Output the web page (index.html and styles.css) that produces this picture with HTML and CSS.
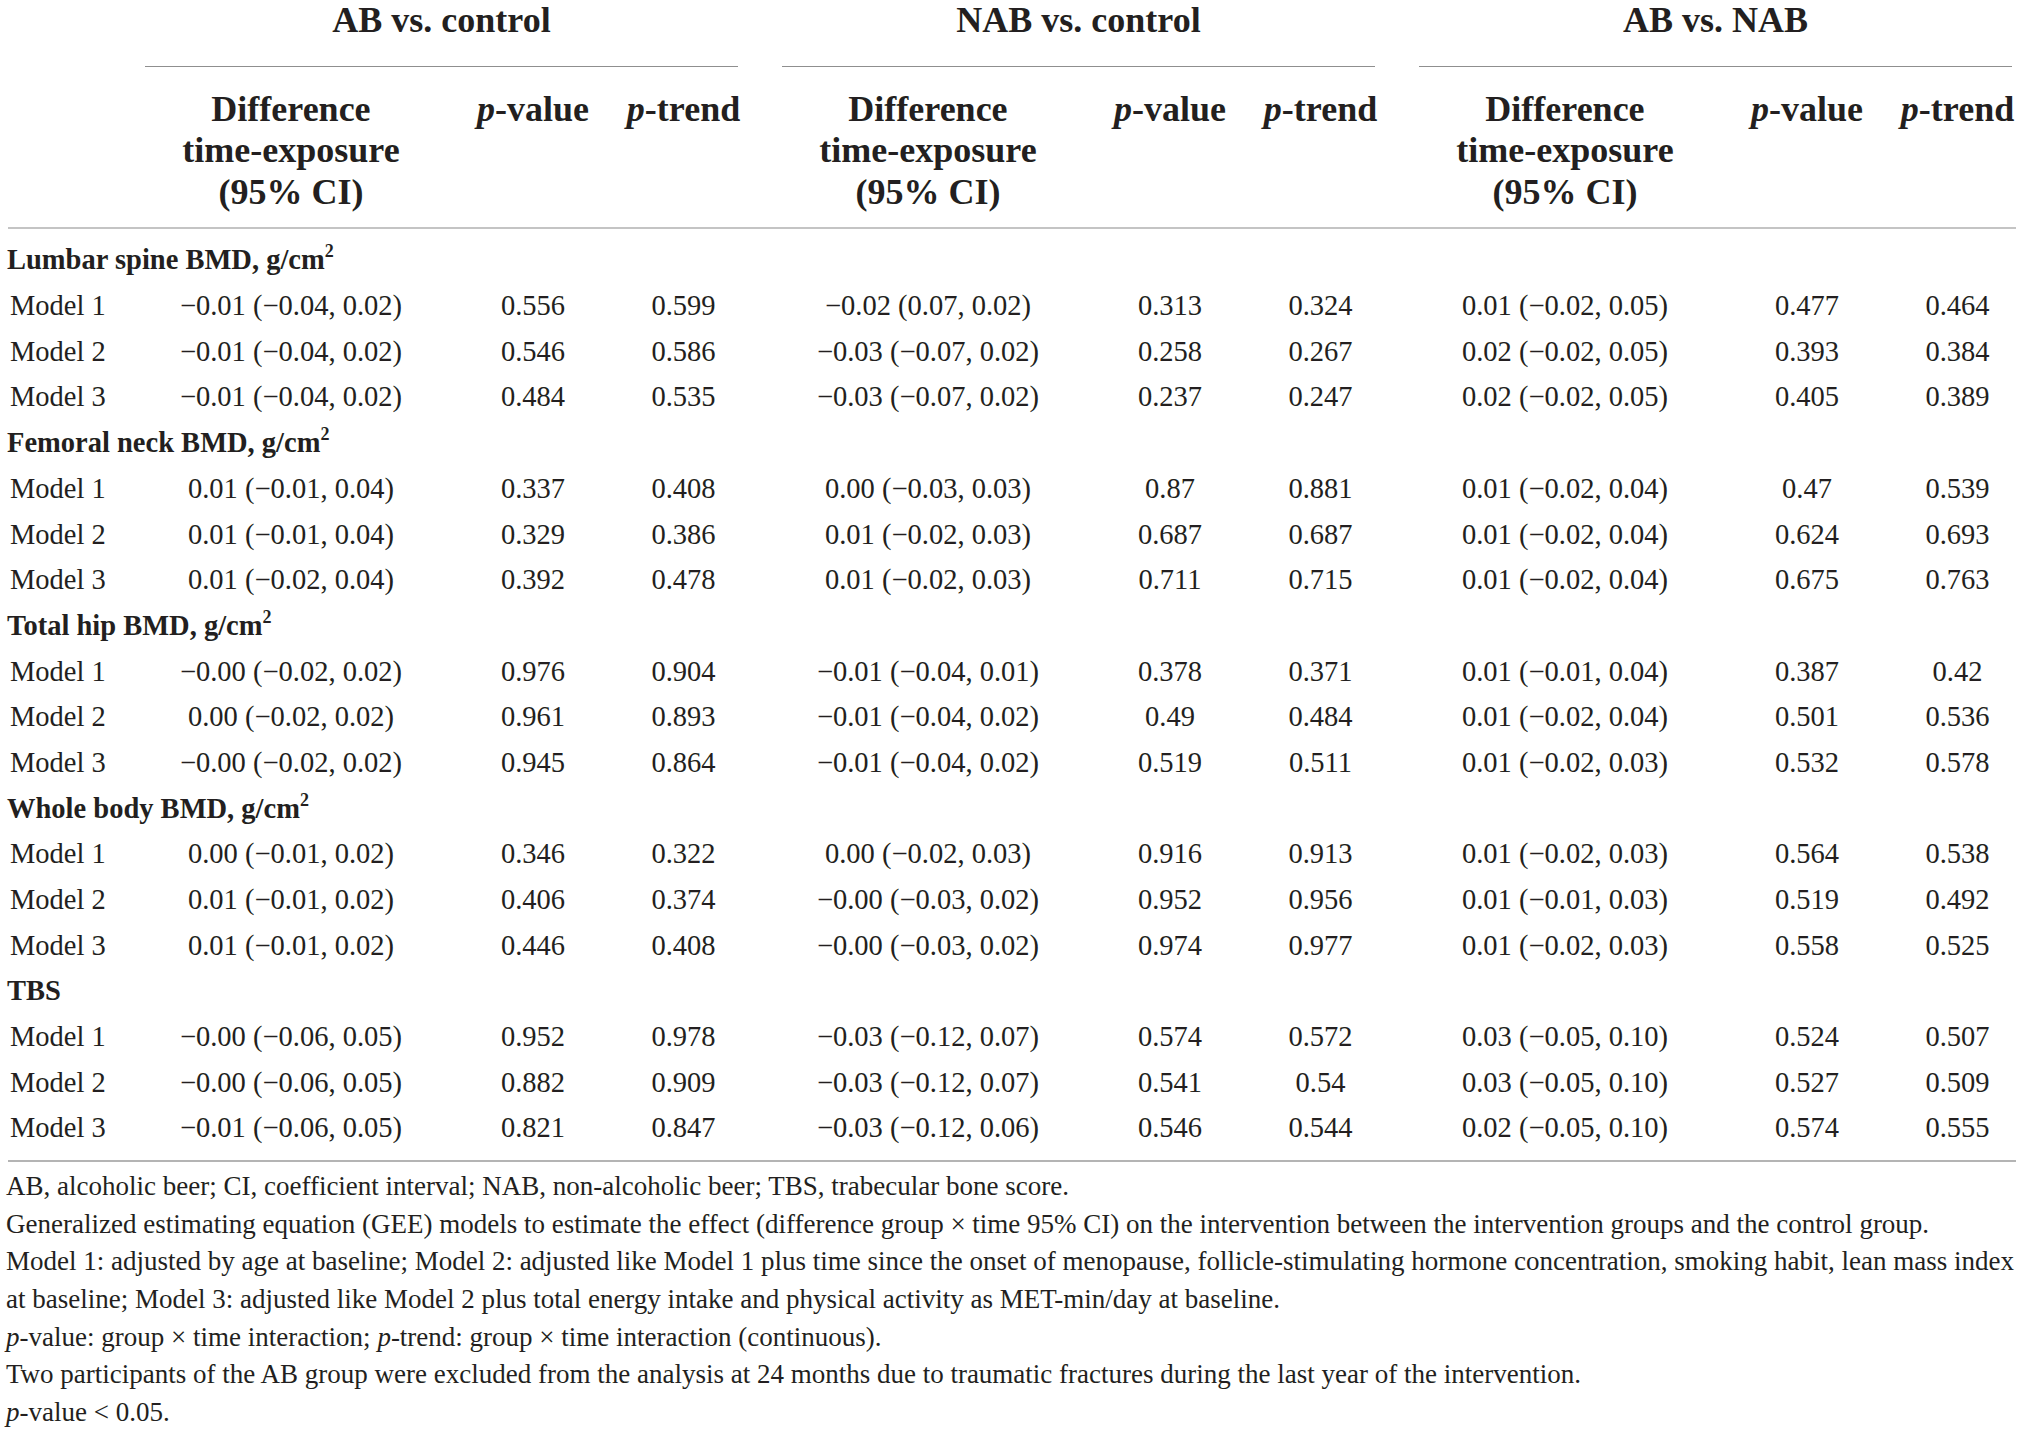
FILE: index.html
```html
<!DOCTYPE html>
<html lang="en">
<head>
<meta charset="utf-8">
<title>Table</title>
<link rel="stylesheet" href="styles.css">
</head>
<body>
<div class="table">
  <div class="row groups">
    <div></div>
    <div class="group-head"><span>AB vs. control</span></div>
    <div class="group-head"><span>NAB vs. control</span></div>
    <div class="group-head"><span>AB vs. NAB</span></div>
  </div>
  <div class="row colheads">
    <div></div>
    <div class="grp"><div class="c">Difference<br>time-exposure<br>(95% CI)</div><div class="c"><span><i>p</i>-value</span></div><div class="c"><span><i>p</i>-trend</span></div></div>
    <div class="grp"><div class="c">Difference<br>time-exposure<br>(95% CI)</div><div class="c"><span><i>p</i>-value</span></div><div class="c"><span><i>p</i>-trend</span></div></div>
    <div class="grp"><div class="c">Difference<br>time-exposure<br>(95% CI)</div><div class="c"><span><i>p</i>-value</span></div><div class="c"><span><i>p</i>-trend</span></div></div>
  </div>
  <div class="body">
    <div class="section">Lumbar spine BMD, g/cm<sup>2</sup></div>
    <div class="row data"><div class="lab">Model 1</div>
      <div class="grp"><div class="c">−0.01 (−0.04, 0.02)</div><div class="c">0.556</div><div class="c">0.599</div></div>
      <div class="grp"><div class="c">−0.02 (0.07, 0.02)</div><div class="c">0.313</div><div class="c">0.324</div></div>
      <div class="grp"><div class="c">0.01 (−0.02, 0.05)</div><div class="c">0.477</div><div class="c">0.464</div></div>
    </div>
    <div class="row data"><div class="lab">Model 2</div>
      <div class="grp"><div class="c">−0.01 (−0.04, 0.02)</div><div class="c">0.546</div><div class="c">0.586</div></div>
      <div class="grp"><div class="c">−0.03 (−0.07, 0.02)</div><div class="c">0.258</div><div class="c">0.267</div></div>
      <div class="grp"><div class="c">0.02 (−0.02, 0.05)</div><div class="c">0.393</div><div class="c">0.384</div></div>
    </div>
    <div class="row data"><div class="lab">Model 3</div>
      <div class="grp"><div class="c">−0.01 (−0.04, 0.02)</div><div class="c">0.484</div><div class="c">0.535</div></div>
      <div class="grp"><div class="c">−0.03 (−0.07, 0.02)</div><div class="c">0.237</div><div class="c">0.247</div></div>
      <div class="grp"><div class="c">0.02 (−0.02, 0.05)</div><div class="c">0.405</div><div class="c">0.389</div></div>
    </div>

    <div class="section">Femoral neck BMD, g/cm<sup>2</sup></div>
    <div class="row data"><div class="lab">Model 1</div>
      <div class="grp"><div class="c">0.01 (−0.01, 0.04)</div><div class="c">0.337</div><div class="c">0.408</div></div>
      <div class="grp"><div class="c">0.00 (−0.03, 0.03)</div><div class="c">0.87</div><div class="c">0.881</div></div>
      <div class="grp"><div class="c">0.01 (−0.02, 0.04)</div><div class="c">0.47</div><div class="c">0.539</div></div>
    </div>
    <div class="row data"><div class="lab">Model 2</div>
      <div class="grp"><div class="c">0.01 (−0.01, 0.04)</div><div class="c">0.329</div><div class="c">0.386</div></div>
      <div class="grp"><div class="c">0.01 (−0.02, 0.03)</div><div class="c">0.687</div><div class="c">0.687</div></div>
      <div class="grp"><div class="c">0.01 (−0.02, 0.04)</div><div class="c">0.624</div><div class="c">0.693</div></div>
    </div>
    <div class="row data"><div class="lab">Model 3</div>
      <div class="grp"><div class="c">0.01 (−0.02, 0.04)</div><div class="c">0.392</div><div class="c">0.478</div></div>
      <div class="grp"><div class="c">0.01 (−0.02, 0.03)</div><div class="c">0.711</div><div class="c">0.715</div></div>
      <div class="grp"><div class="c">0.01 (−0.02, 0.04)</div><div class="c">0.675</div><div class="c">0.763</div></div>
    </div>

    <div class="section">Total hip BMD, g/cm<sup>2</sup></div>
    <div class="row data"><div class="lab">Model 1</div>
      <div class="grp"><div class="c">−0.00 (−0.02, 0.02)</div><div class="c">0.976</div><div class="c">0.904</div></div>
      <div class="grp"><div class="c">−0.01 (−0.04, 0.01)</div><div class="c">0.378</div><div class="c">0.371</div></div>
      <div class="grp"><div class="c">0.01 (−0.01, 0.04)</div><div class="c">0.387</div><div class="c">0.42</div></div>
    </div>
    <div class="row data"><div class="lab">Model 2</div>
      <div class="grp"><div class="c">0.00 (−0.02, 0.02)</div><div class="c">0.961</div><div class="c">0.893</div></div>
      <div class="grp"><div class="c">−0.01 (−0.04, 0.02)</div><div class="c">0.49</div><div class="c">0.484</div></div>
      <div class="grp"><div class="c">0.01 (−0.02, 0.04)</div><div class="c">0.501</div><div class="c">0.536</div></div>
    </div>
    <div class="row data"><div class="lab">Model 3</div>
      <div class="grp"><div class="c">−0.00 (−0.02, 0.02)</div><div class="c">0.945</div><div class="c">0.864</div></div>
      <div class="grp"><div class="c">−0.01 (−0.04, 0.02)</div><div class="c">0.519</div><div class="c">0.511</div></div>
      <div class="grp"><div class="c">0.01 (−0.02, 0.03)</div><div class="c">0.532</div><div class="c">0.578</div></div>
    </div>

    <div class="section">Whole body BMD, g/cm<sup>2</sup></div>
    <div class="row data"><div class="lab">Model 1</div>
      <div class="grp"><div class="c">0.00 (−0.01, 0.02)</div><div class="c">0.346</div><div class="c">0.322</div></div>
      <div class="grp"><div class="c">0.00 (−0.02, 0.03)</div><div class="c">0.916</div><div class="c">0.913</div></div>
      <div class="grp"><div class="c">0.01 (−0.02, 0.03)</div><div class="c">0.564</div><div class="c">0.538</div></div>
    </div>
    <div class="row data"><div class="lab">Model 2</div>
      <div class="grp"><div class="c">0.01 (−0.01, 0.02)</div><div class="c">0.406</div><div class="c">0.374</div></div>
      <div class="grp"><div class="c">−0.00 (−0.03, 0.02)</div><div class="c">0.952</div><div class="c">0.956</div></div>
      <div class="grp"><div class="c">0.01 (−0.01, 0.03)</div><div class="c">0.519</div><div class="c">0.492</div></div>
    </div>
    <div class="row data"><div class="lab">Model 3</div>
      <div class="grp"><div class="c">0.01 (−0.01, 0.02)</div><div class="c">0.446</div><div class="c">0.408</div></div>
      <div class="grp"><div class="c">−0.00 (−0.03, 0.02)</div><div class="c">0.974</div><div class="c">0.977</div></div>
      <div class="grp"><div class="c">0.01 (−0.02, 0.03)</div><div class="c">0.558</div><div class="c">0.525</div></div>
    </div>

    <div class="section">TBS</div>
    <div class="row data"><div class="lab">Model 1</div>
      <div class="grp"><div class="c">−0.00 (−0.06, 0.05)</div><div class="c">0.952</div><div class="c">0.978</div></div>
      <div class="grp"><div class="c">−0.03 (−0.12, 0.07)</div><div class="c">0.574</div><div class="c">0.572</div></div>
      <div class="grp"><div class="c">0.03 (−0.05, 0.10)</div><div class="c">0.524</div><div class="c">0.507</div></div>
    </div>
    <div class="row data"><div class="lab">Model 2</div>
      <div class="grp"><div class="c">−0.00 (−0.06, 0.05)</div><div class="c">0.882</div><div class="c">0.909</div></div>
      <div class="grp"><div class="c">−0.03 (−0.12, 0.07)</div><div class="c">0.541</div><div class="c">0.54</div></div>
      <div class="grp"><div class="c">0.03 (−0.05, 0.10)</div><div class="c">0.527</div><div class="c">0.509</div></div>
    </div>
    <div class="row data"><div class="lab">Model 3</div>
      <div class="grp"><div class="c">−0.01 (−0.06, 0.05)</div><div class="c">0.821</div><div class="c">0.847</div></div>
      <div class="grp"><div class="c">−0.03 (−0.12, 0.06)</div><div class="c">0.546</div><div class="c">0.544</div></div>
      <div class="grp"><div class="c">0.02 (−0.05, 0.10)</div><div class="c">0.574</div><div class="c">0.555</div></div>
    </div>
  </div>
</div>
<div class="notes">
  <p>AB, alcoholic beer; CI, coefficient interval; NAB, non-alcoholic beer; TBS, trabecular bone score.</p>
  <p>Generalized estimating equation (GEE) models to estimate the effect (difference group × time 95% CI) on the intervention between the intervention groups and the control group.</p>
  <p>Model 1: adjusted by age at baseline; Model 2: adjusted like Model 1 plus time since the onset of menopause, follicle-stimulating hormone concentration, smoking habit, lean mass index<br>at baseline; Model 3: adjusted like Model 2 plus total energy intake and physical activity as MET-min/day at baseline.</p>
  <p><i>p</i>-value: group × time interaction; <i>p</i>-trend: group × time interaction (continuous).</p>
  <p>Two participants of the AB group were excluded from the analysis at 24 months due to traumatic fractures during the last year of the intervention.</p>
  <p><i>p</i>-value &lt; 0.05.</p>
</div>
</body>
</html>
```

FILE: styles.css
```css
html, body {
  margin: 0;
  padding: 0;
  background: #ffffff;
}

body {
  font-family: "Liberation Serif", "Times New Roman", serif;
  color: #231f20;
  width: 2023px;
}

.table {
  width: 2023px;
}

.row {
  display: grid;
  grid-template-columns: 101px repeat(3, 593px);
  column-gap: 44px;
}

.grp {
  display: grid;
  grid-template-columns: 292px 192px 109px;
}

.c {
  display: flex;
  justify-content: center;
  text-align: center;
  white-space: nowrap;
}

/* group header row */
.groups {
  font-weight: bold;
  font-size: 36px;
  line-height: 40px;
}

.group-head {
  text-align: center;
  padding-bottom: 26px;
  border-bottom: 1.5px solid #8f8f8f;
  white-space: nowrap;
}

/* column header row */
.colheads {
  grid-template-columns: 93px repeat(3, 593px);
  font-weight: bold;
  font-size: 36px;
  line-height: 41.3px;
  padding-top: 22px;
  padding-bottom: 14px;
  margin-left: 8px;
  margin-right: 7px;
  border-bottom: 2.5px solid #c4c4c4;
}

.colheads .grp {
  align-items: start;
}

/* body */
.body {
  padding-top: 8.5px;
  padding-bottom: 9px;
  margin-left: 8px;
  margin-right: 7px;
  border-bottom: 2.5px solid #b4b4b4;
}

.section {
  font-weight: bold;
  font-size: 28.5px;
  line-height: 45.7px;
  height: 45.7px;
  margin-left: -1px;
  white-space: nowrap;
}

.section sup {
  font-size: 18px;
  line-height: 0;
  vertical-align: 12px;
}

.data {
  font-size: 28.5px;
  line-height: 45.7px;
  height: 45.7px;
  margin-left: -8px;
}

.lab {
  padding-left: 10px;
  white-space: nowrap;
}

/* footnotes */
.notes {
  padding: 6px 0 0 6px;
  font-size: 27px;
  line-height: 37.6px;
  white-space: nowrap;
}

.notes p {
  margin: 0;
}
```
